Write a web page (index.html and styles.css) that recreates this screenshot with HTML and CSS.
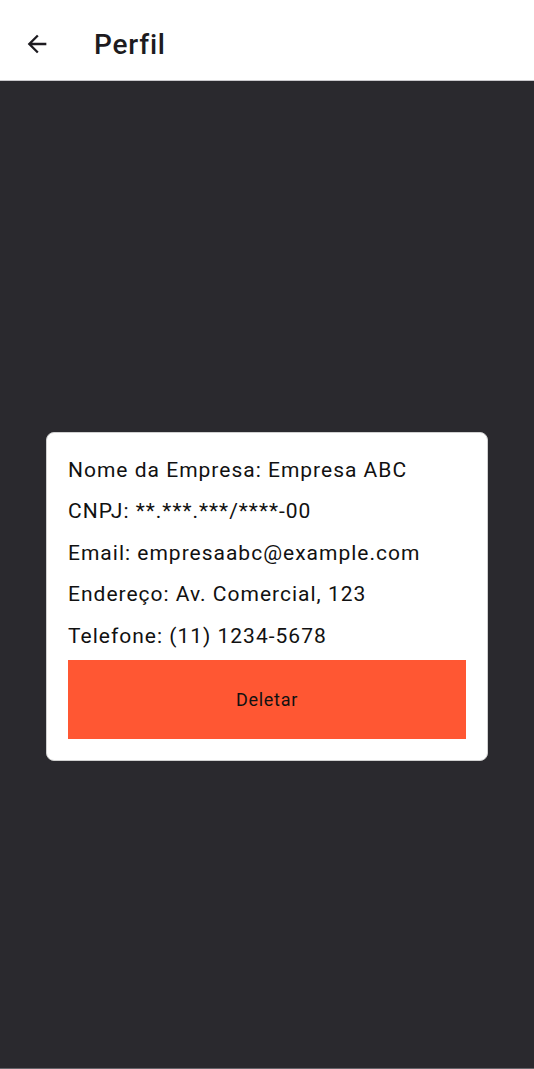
FILE: index.html
```html
<!DOCTYPE html>
<html lang="pt">
<head>
<meta charset="utf-8">
<title>Perfil</title>
<link rel="stylesheet" href="styles.css">
</head>
<body>
<div class="app">
  <header class="topbar">
    <button class="back" aria-label="Voltar">
      <svg width="24" height="24" viewBox="0 0 24 24"><path d="M20 11H7.83l5.59-5.59L12 4l-8 8 8 8 1.41-1.41L7.83 13H20v-2z" fill="#1d1b20"/></svg>
    </button>
    <h1 class="title">Perfil</h1>
  </header>
  <main class="content">
    <section class="card">
      <p class="line">Nome da Empresa: Empresa ABC</p>
      <p class="line">CNPJ: **.***.***/****-00</p>
      <p class="line">Email: empresaabc@example.com</p>
      <p class="line">Endereço: Av. Comercial, 123</p>
      <p class="line">Telefone: (11) 1234-5678</p>
      <button class="delete">Deletar</button>
    </section>
  </main>
</div>
</body>
</html>
```

FILE: styles.css
```css
* { box-sizing: border-box; }
html, body { margin: 0; padding: 0; height: 100%; }
body {
  font-family: Roboto, "Noto Sans", sans-serif;
  background: #2a292e;
}
.app {
  display: flex;
  flex-direction: column;
  height: 1069px;
  border-bottom: 1px solid #66656a;
}
.topbar {
  height: 81px;
  background: #ffffff;
  border-bottom: 1px solid #c9c8cc;
  display: flex;
  align-items: center;
  padding: 0 0 0 13px;
  flex: none;
}
.back {
  width: 48px;
  height: 48px;
  border: none;
  background: transparent;
  padding: 0;
  display: flex;
  align-items: center;
  justify-content: center;
  margin-right: 33px;
  margin-top: 8px;
}
.back svg { width: 28px; height: 28px; }
.title {
  margin: 8px 0 0 0;
  font-size: 28px;
  font-weight: 500;
  color: #1d1b20;
  letter-spacing: 0.8px;
}
.content {
  flex: 1;
  display: flex;
  align-items: center;
  justify-content: center;
  padding-top: 44px;
}
.card {
  width: 442px;
  background: #ffffff;
  border: 1px solid #d0d0d0;
  border-radius: 8px;
  padding: 17px 21px 21px 21px;
  display: flex;
  flex-direction: column;
}
.line {
  margin: 0;
  height: 41.6px;
  line-height: 41.6px;
  font-size: 21px;
  letter-spacing: 1px;
  color: #111111;
}
.delete {
  margin-top: 3px;
  height: 79px;
  border: none;
  background: #ff5733;
  color: #111111;
  font-family: Roboto, "Noto Sans", sans-serif;
  font-size: 18px;
  letter-spacing: 0.7px;
  width: 100%;
}
```
